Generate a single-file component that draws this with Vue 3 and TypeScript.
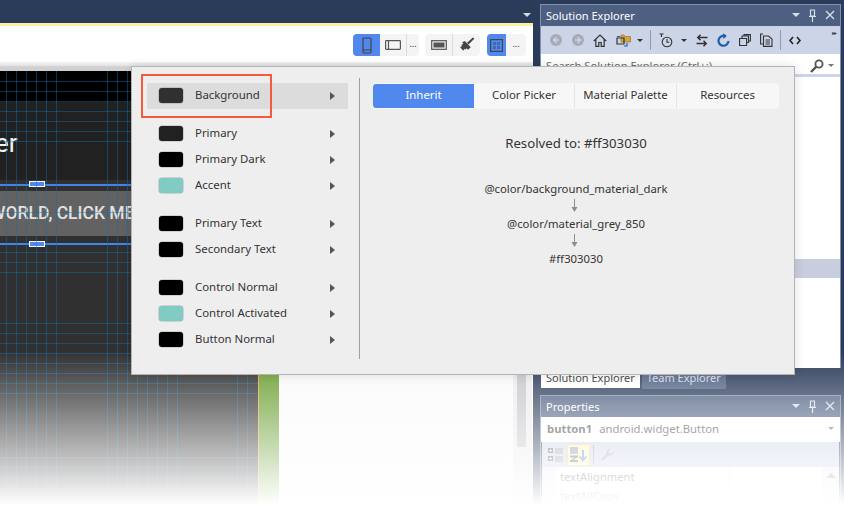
<script setup lang="ts">
const vLines = [6, 16, 26, 36, 46, 56, 107, 117, 127, 137, 147, 157, 167, 177, 237, 247]
const hLines = [81, 91, 101, 111, 121, 131, 141, 212, 252, 262, 272, 323, 333, 343, 353, 363, 373, 383, 393, 457, 467, 477, 488]

const colorGroups = [
  [{ name: 'Background', color: '#303030', active: true }],
  [
    { name: 'Primary', color: '#212121' },
    { name: 'Primary Dark', color: '#000000' },
    { name: 'Accent', color: '#80cbc4' },
  ],
  [
    { name: 'Primary Text', color: '#000000' },
    { name: 'Secondary Text', color: '#000000' },
  ],
  [
    { name: 'Control Normal', color: '#000000' },
    { name: 'Control Activated', color: '#80cbc4' },
    { name: 'Button Normal', color: '#000000' },
  ],
]

const tabs = ['Inherit', 'Color Picker', 'Material Palette', 'Resources']
</script>

<template>
  <div class="ide">
    <div class="doc">
      <div class="doc-strip"><span class="caret"></span></div>
      <div class="doc-toolbar">
        <div class="btn-group">
          <div class="tool on">
            <svg width="10" height="17" viewBox="0 0 10 17" fill="none" stroke="#444" stroke-width="1.2"><rect x="1" y="1" width="8" height="15" rx="1"/><path d="M1 13h8"/></svg>
          </div>
          <div class="tool slim">
            <svg width="16" height="10" viewBox="0 0 16 10" fill="none" stroke="#555" stroke-width="1.2"><rect x=".6" y=".6" width="14.8" height="8.8" rx=".8"/><path d="M3.5 1v8"/></svg>
          </div>
          <div class="tool more sep">...</div>
        </div>
        <div class="btn-group">
          <div class="tool">
            <svg width="16" height="10" viewBox="0 0 16 10" fill="none"><rect x=".7" y=".7" width="14.6" height="8.6" stroke="#555" stroke-width="1.2"/><rect x="2.5" y="2.5" width="11" height="5" fill="#555"/></svg>
          </div>
          <div class="tool sep broad">
            <svg width="16" height="16" viewBox="0 0 15 15"><path d="M14.5 1.5 9 7l-1.5-1.5L13 .5z" fill="#444"/><path d="M5.5 3.8 11 9.5 8.5 12 7 10.5 6 12 5 11 4 13 1 9.5 3 8.5 2 7.5l2-1L3 5z" fill="#444"/></svg>
          </div>
        </div>
        <div class="btn-group last">
          <div class="tool on narrow">
            <svg width="13" height="13" viewBox="0 0 13 13" fill="none"><rect x=".6" y=".6" width="11.8" height="11.8" stroke="#444" stroke-width="1.2"/><path d="M3 3h3v3H3zM7 3h3v3H7zM3 7h3v3H3zM7 7h3v3H7z" fill="#3f68b2"/></svg>
          </div>
          <div class="tool more end">...</div>
        </div>
      </div>
      <div class="doc-ruler"></div>
      <div class="doc-work">
        <div class="canvas">
          <div class="status-bar"></div>
          <div class="app-bar"><span class="app-title">er</span></div>
          <div class="button-widget">WORLD, CLICK ME</div>
          <div class="sel-line top"></div>
          <div class="sel-line bottom"></div>
          <div class="handle h-top"></div>
          <div class="handle h-bottom"></div>
          <svg class="grid" width="258" height="437" viewBox="0 71 258 437">
            <line v-for="x in vLines" :key="'v' + x" :x1="x + 0.5" y1="71" :x2="x + 0.5" y2="508" />
            <line v-for="y in hLines" :key="'h' + y" x1="0" :y1="y + 0.5" x2="258" :y2="y + 0.5" />
          </svg>
        </div>
        <div class="margin-strip"></div>
        <div class="work-white"></div>
        <div class="scroller"><div class="thumb"></div></div>
      </div>
    </div>

    <div class="side">
      <section class="panel explorer">
        <header class="panel-head">
          <span>Solution Explorer</span>
          <span class="head-icons">
            <i class="head-caret"></i>
            <svg width="9" height="13" viewBox="0 0 9 13" fill="none" stroke="#d8deea" stroke-width="1.2"><path d="M2.5 1h4v6h-4zM1 7.5h7M4.5 8v5"/></svg>
            <svg width="10" height="10" viewBox="0 0 10 10" stroke="#d8deea" stroke-width="1.3"><path d="m1 1 8 8M9 1 1 9"/></svg>
          </span>
        </header>
        <div class="ex-toolbar">
          <svg class="nudge" width="12" height="12" viewBox="0 0 12 12"><circle cx="6" cy="6" r="6" fill="#a6abb5"/><path d="M6.5 3 3.5 6l3 3M4 6h5" fill="none" stroke="#ccd5e8" stroke-width="1.4"/></svg>
          <svg width="12" height="12" viewBox="0 0 12 12"><circle cx="6" cy="6" r="6" fill="#a6abb5"/><path d="M5.5 3l3 3-3 3M8 6H3" fill="none" stroke="#ccd5e8" stroke-width="1.4"/></svg>
          <svg width="14" height="13" viewBox="0 0 14 13" fill="none" stroke="#333" stroke-width="1.2"><path d="M.8 7 7 1l6.2 6M2.8 5.5V12.4h3V8.5h2.4v3.9h3V5.5"/></svg>
          <svg width="15" height="14" viewBox="0 0 15 14"><path d="M5 2h3l1 1.5h5.5V9H5z" fill="#d8a53f" stroke="#8a6a20" stroke-width=".6"/><path d="M1 5h7v6H1z" fill="none" stroke="#333" stroke-width="1.2"/><path d="M1 3.5h3M11 10v3H8" fill="none" stroke="#1f5fa8" stroke-width="1.2"/></svg>
          <i class="tiny-caret"></i>
          <i class="tb-sep"></i>
          <svg width="14" height="15" viewBox="0 0 14 15" fill="none" stroke="#333" stroke-width="1.1"><circle cx="8" cy="9" r="4.8"/><path d="M8 6v3.3h2.4M.5 1h4M2.5 1v3"/></svg>
          <i class="tiny-caret near"></i>
          <svg width="12" height="13" viewBox="0 0 12 13" fill="none" stroke="#333" stroke-width="1.5"><path d="M11.5 3.5H2M4.5.8 1.8 3.5l2.700 2.700M.5 9.5H10M7.5 6.8l2.700 2.700-2.700 2.700"/></svg>
          <svg width="13" height="14" viewBox="0 0 13 14" fill="none" stroke="#1b5fa8" stroke-width="2.2"><path d="M8.6 3.2A5 5 0 1 0 11.5 8"/><path d="M6.2.2 9.8 3 6.2 6z" fill="#1b5fa8" stroke="none"/></svg>
          <svg width="12" height="12" viewBox="0 0 12 12" fill="none" stroke="#333" stroke-width="1.1"><path d="M.6 4.500h7v7h-7zM3 4V2h6.500v6.500H8M5 1.700V.6h6.400v6.400H10"/></svg>
          <svg width="13" height="14" viewBox="0 0 13 14" fill="none" stroke="#333" stroke-width="1.1"><path d="M3 1H.6v10H3M3.500 3h5l3.500 3v7.400H3.500zM5.500 7h4.500M5.500 9h4.500M5.500 11h4.500"/></svg>
          <i class="tb-sep"></i>
          <svg width="12" height="9" viewBox="0 0 12 9" fill="none" stroke="#222" stroke-width="1.6"><path d="M4 1 1 4.500 4 8M8 1l3 3.500L8 8"/></svg>
          <span class="ex-overflow">▸▸</span>
        </div>
        <div class="ex-search">
          <span>Search Solution Explorer (Ctrl+;)</span>
          <svg width="14" height="14" viewBox="0 0 14 14" fill="none" stroke="#555" stroke-width="1.8"><circle cx="9" cy="5" r="3.600"/><path d="M6.300 7.700 1 13" stroke-width="2.400"/></svg>
          <i class="tiny-caret grey"></i>
        </div>
        <div class="ex-tree"><div class="tree-band"></div></div>
      </section>
      <div class="side-tabs">
        <span class="side-tab current">Solution Explorer</span>
        <span class="side-tab">Team Explorer</span>
      </div>
      <section class="panel props">
        <header class="panel-head">
          <span>Properties</span>
          <span class="head-icons">
            <i class="head-caret"></i>
            <svg width="9" height="13" viewBox="0 0 9 13" fill="none" stroke="#d8deea" stroke-width="1.2"><path d="M2.500 1h4v6h-4zM1 7.500h7M4.500 8v5"/></svg>
            <svg width="10" height="10" viewBox="0 0 10 10" stroke="#d8deea" stroke-width="1.3"><path d="m1 1 8 8M9 1 1 9"/></svg>
          </span>
        </header>
        <div class="prop-target">
          <b>button1</b><span>android.widget.Button</span>
          <i class="tiny-caret grey"></i>
        </div>
        <div class="prop-toolbar">
          <svg width="15" height="14" viewBox="0 0 15 14"><path d="M0 0h5v5H0zM0 8h5v5H0z" fill="#555"/><path d="M1 2.500h3M2.500 1v3M1 10.500h3M2.500 9v3" stroke="#fff"/><path d="M7 1h8M7 3h8M7 5h8M7 9h8M7 11h8M7 13h8" stroke="#777"/></svg>
          <span class="az-btn">
            <svg width="17" height="15" viewBox="0 0 17 15"><rect x="0" y="0" width="8" height="7" fill="#8a93a5"/><path d="M0 8.500h8v1.500L3 13h5v2H0v-1.500L5 10.500H0z" fill="#555"/><path d="M13 3v10M9.800 9.500 13 13.500l3.200-4" fill="none" stroke="#4a86dc" stroke-width="2"/></svg>
          </span>
          <i class="tb-sep short"></i>
          <svg class="wrench" width="14" height="14" viewBox="0 0 15 15"><path d="M14.500 3.500a4 4 0 0 1-5.500 4.200L3 14 1 12l6.300-6A4 4 0 0 1 11.500.5L9 3l.5 2.500L12 6z" fill="#a8acb4"/></svg>
        </div>
        <div class="prop-list">
          <div class="prop-names">
            <div>textAlignment</div>
            <div>textAllCaps</div>
          </div>
          <i class="prop-up"></i>
        </div>
      </section>
    </div>

    <div class="fade"></div>

    <div class="popover">
      <div class="color-list">
        <div v-for="(group, i) in colorGroups" :key="i" class="color-group">
          <div v-for="item in group" :key="item.name" class="color-row" :class="{ active: item.active }">
            <span class="swatch" :style="{ background: item.color }"></span>
            <span class="color-name">{{ item.name }}</span>
            <i class="row-arrow"></i>
          </div>
        </div>
      </div>
      <div class="detail">
        <div class="tabs">
          <div v-for="(t, i) in tabs" :key="t" class="tab" :class="{ selected: i === 0 }">{{ t }}</div>
        </div>
        <div class="resolved">Resolved to: #ff303030</div>
        <div class="chain">
          <div>@color/background_material_dark</div>
          <svg class="chain-arrow" width="7" height="13" viewBox="0 0 7 13"><path d="M3.500 0v9" stroke="#8c8c8c"/><path d="M.5 8h6l-3 5z" fill="#8c8c8c"/></svg>
          <div>@color/material_grey_850</div>
          <svg class="chain-arrow" width="7" height="13" viewBox="0 0 7 13"><path d="M3.500 0v9" stroke="#8c8c8c"/><path d="M.5 8h6l-3 5z" fill="#8c8c8c"/></svg>
          <div>#ff303030</div>
        </div>
      </div>
      <div class="callout"></div>
    </div>
  </div>
</template>

<style scoped>
.ide {
  position: relative;
  display: flex;
  width: 844px;
  height: 508px;
  overflow: hidden;
  background: #2b3b5a;
  font-family: "Noto Sans", "Open Sans", sans-serif;
  font-size: 11.4px;
  color: #333;
}

/* designer document */
.doc {
  display: flex;
  flex-direction: column;
  width: 533px;
  flex: none;
}
.doc-strip {
  display: flex;
  align-items: flex-end;
  justify-content: flex-end;
  height: 23px;
  padding: 0 2px 6px 0;
  box-sizing: border-box;
}
.caret {
  width: 0;
  height: 0;
  border-left: 4px solid transparent;
  border-right: 4px solid transparent;
  border-top: 4px solid #d6dbe6;
}
.doc-toolbar {
  display: flex;
  justify-content: flex-end;
  gap: 6px;
  height: 39px;
  padding: 8px 7px 0 0;
  box-sizing: border-box;
  background: #fff;
  border-top: 3px solid #fdf0a0;
}
.btn-group {
  display: flex;
  height: 22px;
  background: #f4f4f4;
  border-radius: 4px;
  overflow: hidden;
}
.btn-group.last { margin-left: 1px; }
.tool {
  display: flex;
  align-items: center;
  justify-content: center;
  width: 27px;
  height: 22px;
  box-sizing: border-box;
}
.tool.on { background: #5188ee; }
.tool.slim { width: 26px; }
.tool.broad { width: 28px; }
.tool.narrow { width: 19px; }
.tool.more {
  width: 13px;
  font-size: 9px;
  color: #333;
  padding-bottom: 4px;
}
.tool.more.end { width: 20px; }
.tool.sep { border-left: 1px solid #dcdcdc; }
.doc-ruler {
  height: 9px;
  background: linear-gradient(#f4f4f4, #e4e4e4 40%, #d2d2d2 45%, #cfcfcf);
}
.doc-work {
  display: flex;
  flex: 1;
  background: #fff;
}
.canvas {
  position: relative;
  width: 259px;
  flex: none;
  box-sizing: border-box;
  background: #303030;
  overflow: hidden;
  border-right: 1px solid #e8a04a;
}
.status-bar { height: 31px; background: #000; }
.app-bar {
  height: 78px;
  background: #212121;
  overflow: hidden;
}
.app-title {
  display: block;
  margin: 26px 0 0 -5px;
  font-family: Roboto, sans-serif;
  font-size: 26px;
  line-height: 30px;
  color: #f2f2f2;
}
.button-widget {
  position: absolute;
  left: -40px;
  top: 120px;
  width: 298px;
  height: 45px;
  padding-left: 30px;
  box-sizing: border-box;
  background: #626262;
  font-family: Roboto, sans-serif;
  font-weight: 500;
  font-size: 17.5px;
  line-height: 45px;
  color: #e2e2e2;
  white-space: nowrap;
}
.sel-line {
  position: absolute;
  left: 0;
  width: 258px;
  height: 2px;
  background: #3f86ee;
}
.sel-line.top { top: 113px; }
.sel-line.bottom { top: 172px; }
.handle {
  position: absolute;
  left: 29px;
  width: 16px;
  height: 6px;
  box-sizing: border-box;
  background: #5188ee;
  border: 1px solid #fff;
}
.h-top { top: 110px; }
.h-bottom { top: 170px; }
.grid {
  position: absolute;
  left: 0;
  top: 0;
}
.grid line {
  stroke: #1070b0;
  stroke-opacity: 0.45;
  stroke-width: 1;
}
.margin-strip {
  width: 20px;
  flex: none;
  background: #6a9f30;
  box-shadow: 2px 0 4px rgba(0, 0, 0, 0.45);
}
.work-white {
  flex: 1;
  background: #fafafa;
}
.scroller {
  width: 20px;
  flex: none;
  padding: 0 6px 0 4px;
  box-sizing: border-box;
  background: #ececec;
  border-right: 1px solid #fff;
}
.thumb {
  height: 376px;
  background: #c5c6cc;
}

/* right docked panels */
.side {
  display: flex;
  flex-direction: column;
  width: 301px;
  margin-left: 7px;
  padding-top: 4px;
}
.panel {
  display: flex;
  flex-direction: column;
  border: 1px solid #7f90b0;
  border-bottom: 0;
}
.panel-head {
  display: flex;
  align-items: center;
  justify-content: space-between;
  height: 21px;
  padding: 0 5px 1px;
  box-sizing: border-box;
  flex: none;
  background: #4d6082;
  color: #fff;
  font-size: 11px;
}
.head-icons {
  display: flex;
  align-items: center;
  gap: 8px;
}
.head-caret {
  width: 0;
  height: 0;
  border-left: 4px solid transparent;
  border-right: 4px solid transparent;
  border-top: 4px solid #d8deea;
}
.explorer { height: 363px; flex: none; }
.ex-toolbar {
  display: flex;
  align-items: center;
  gap: 9px;
  height: 28px;
  padding-left: 9px;
  flex: none;
  background: #ccd5e8;
}
.ex-toolbar .nudge { margin-right: 1px; }
.tiny-caret {
  width: 0;
  height: 0;
  margin-left: -3px;
  border-left: 3px solid transparent;
  border-right: 3px solid transparent;
  border-top: 3px solid #333;
}
.tiny-caret.near { margin-left: -1px; }
.tiny-caret.grey { border-top-color: #777; margin-left: 0; }
.tb-sep {
  width: 1px;
  height: 20px;
  margin: 0 -1px 0 -2px;
  background: #8f9bb3;
}
.ex-overflow {
  margin: -14px 0 0 auto;
  padding-right: 4px;
  font-size: 6px;
  letter-spacing: -1px;
  color: #444;
}
.ex-search {
  display: flex;
  align-items: center;
  gap: 4px;
  height: 17px;
  padding: 3px 6px 0 5px;
  flex: none;
  background: #fff;
  border-bottom: 3px solid #ccd5e8;
  box-sizing: content-box;
  color: #6d6d6d;
  font-size: 11.2px;
}
.ex-search span {
  flex: 1;
  white-space: nowrap;
}
.ex-tree {
  flex: 1;
  padding-top: 182px;
  background: #fff;
}
.tree-band {
  height: 19px;
  background: #c9cede;
}
.side-tabs {
  display: flex;
  gap: 2px;
  height: 21px;
  flex: none;
  padding-left: 1px;
}
.side-tab {
  padding: 0 5px;
  background: #4d6082;
  color: #d8deea;
  font-size: 11px;
  line-height: 20px;
}
.side-tab.current {
  background: #fff;
  color: #222;
  height: 20px;
}
.props {
  margin-top: 6px;
  flex: 1;
}
.prop-target {
  display: flex;
  align-items: center;
  gap: 7px;
  height: 25px;
  padding: 0 6px 2px;
  box-sizing: border-box;
  flex: none;
  background: #fff;
  color: #444;
  font-size: 11.3px;
}
.prop-target b { font-weight: 700; }
.prop-target span { flex: 1; }
.prop-toolbar {
  display: flex;
  align-items: center;
  gap: 4px;
  height: 25px;
  padding-left: 6px;
  margin: 0 1px;
  flex: none;
  background: #ccd5e8;
}
.prop-toolbar .tb-sep.short { margin: 0 0 0 -1px; }
.prop-toolbar .wrench { margin-left: 2px; }
.az-btn {
  display: flex;
  align-items: center;
  justify-content: center;
  width: 23px;
  height: 22px;
  background: #fdf4bf;
  border: 1px solid #f2cf7a;
  box-sizing: border-box;
}
.prop-list {
  display: flex;
  flex: 1;
  margin: 0 1px;
  padding-left: 14px;
  background: #eef0f6;
}
.prop-names {
  width: 266px;
  flex: none;
  background: linear-gradient(90deg, #fff 173px, #e8e8e8 173px, #e8e8e8 174px, #fff 174px);
  padding: 0 0 0 4px;
  box-sizing: border-box;
  font-size: 11.2px;
  line-height: 19px;
  color: #333;
}
.prop-up {
  width: 0;
  height: 0;
  margin: 6px 0 0 4px;
  border-left: 5px solid transparent;
  border-right: 5px solid transparent;
  border-bottom: 5px solid #888;
}

/* fade over the bottom of the shot */
.fade {
  position: absolute;
  left: 0;
  right: 0;
  top: 350px;
  height: 158px;
  background: linear-gradient(rgba(255, 255, 255, 0), #fff 98%);
}

/* colour popover */
.popover {
  position: absolute;
  left: 131px;
  top: 66px;
  display: flex;
  width: 664px;
  height: 309px;
  box-sizing: border-box;
  padding: 11px 15px 0 15px;
  background: #eeeeee;
  border: 1px solid #b4b4b4;
  box-shadow: 0 0 10px rgba(0, 0, 0, 0.12);
}
.color-list {
  display: flex;
  flex-direction: column;
  gap: 12px;
  width: 213px;
  height: 281px;
  flex: none;
  padding: 5px 11px 0 0;
  box-sizing: border-box;
  border-right: 1px solid #9e9e9e;
}
.color-row {
  display: flex;
  align-items: center;
  height: 26px;
  padding: 0 0 1px 12px;
  box-sizing: border-box;
}
.color-row.active { background: #dcdcdc; }
.swatch {
  width: 24px;
  height: 15px;
  flex: none;
  border-radius: 3px;
  box-shadow: 0 0 0 0.5px rgba(0, 0, 0, 0.25);
}
.color-name {
  flex: 1;
  margin: 0 0 2px 12px;
  color: #333;
}
.row-arrow {
  width: 0;
  height: 0;
  margin-right: 13px;
  border-top: 4.5px solid transparent;
  border-bottom: 4.5px solid transparent;
  border-left: 5px solid #555;
}
.detail {
  display: flex;
  flex-direction: column;
  align-items: center;
  flex: 1;
  padding: 5px 0 0 13px;
}
.tabs {
  display: flex;
  width: 100%;
  height: 26px;
  background: #f7f7f7;
  border-radius: 4px;
  overflow: hidden;
}
.tab {
  width: 101px;
  flex: none;
  height: 24px;
  margin-top: 1px;
  text-align: center;
  line-height: 21px;
  color: #333;
  border-left: 1px solid #e4e4e4;
}
.tab:nth-child(2) { border-left: 0; width: 100px; }
.tab.selected {
  background: #5188ee;
  color: #fff;
  border-left: 0;
  border-radius: 3px 0 0 3px;
}
.resolved {
  margin-top: 24px;
  font-size: 13.2px;
  line-height: 20px;
  color: #333;
}
.chain {
  display: flex;
  flex-direction: column;
  align-items: center;
  margin-top: 27px;
  font-size: 11.3px;
  line-height: 18px;
  color: #333;
}
.chain-arrow { margin: 1px 0 3px -2px; }
.callout {
  position: absolute;
  left: 9px;
  top: 7px;
  width: 131px;
  height: 44px;
  box-sizing: border-box;
  border: 2px solid #f25c3b;
}
</style>

<style>
html, body { margin: 0; background: #2b3b5a; }
</style>
